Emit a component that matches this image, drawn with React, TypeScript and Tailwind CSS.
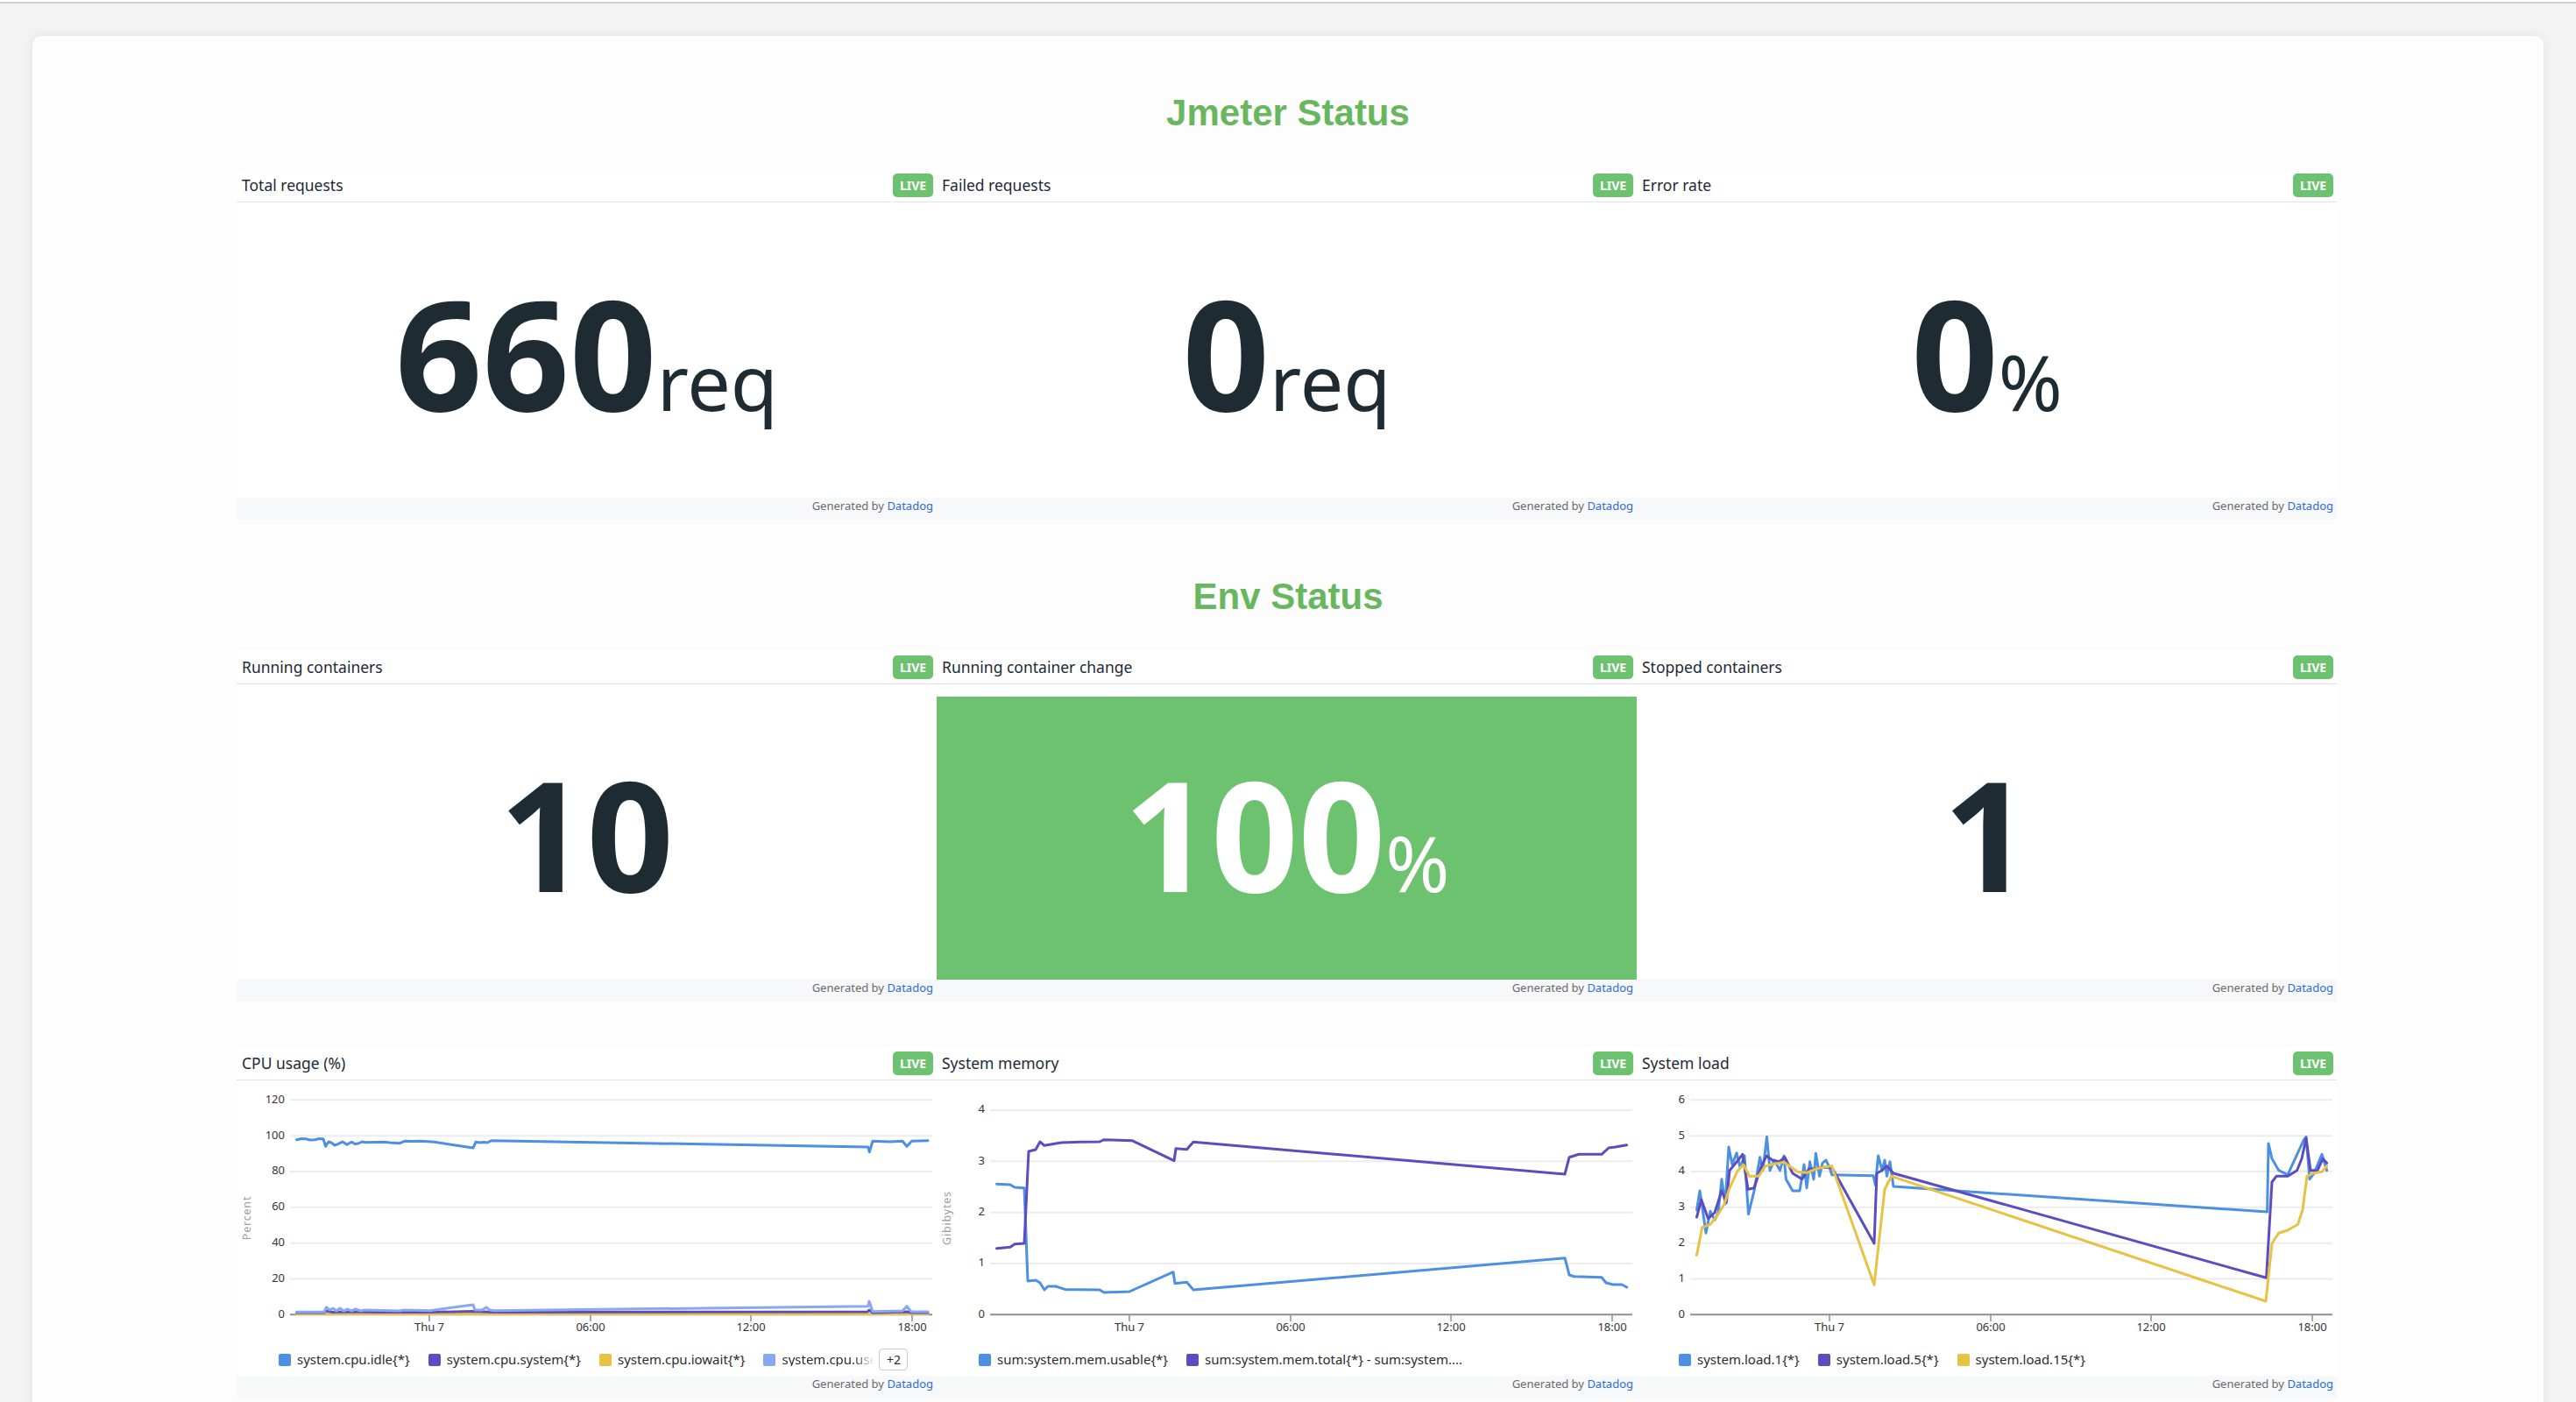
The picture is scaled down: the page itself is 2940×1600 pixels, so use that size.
import React from "react";

const BLUE = "#4b90e2";
const PURPLE = "#5b4cc0";
const YELLOW = "#e8c242";
const LBLUE = "#88a8f3";

type Series = { color: string; pts: string };
type Tick = { label: string; y: number };

function Live() {
  return (
    <span className="h-[27px] w-[46px] rounded-[5px] bg-[#6cc26e] text-white text-[14px] font-bold flex items-center justify-center leading-none">
      LIVE
    </span>
  );
}

function Widget({ title, children }: { title: string; children: React.ReactNode }) {
  return (
    <div className="bg-white flex flex-col">
      <div className="h-[38px] flex items-center justify-between pl-[6px] pr-[4px] border-b border-[#e3e3ea]">
        <span className="text-[17.5px] text-[#1d2a35] leading-none">{title}</span>
        <Live />
      </div>
      <div className="h-[337px] relative overflow-hidden">{children}</div>
      <div className="h-[25px] bg-[#f7f8fa] flex items-start justify-end pr-[4px] pt-[1px] text-[13px] leading-[16px] text-[#6b6b6b]">
        Generated by&nbsp;<span className="text-[#2f6bd3]">Datadog</span>
      </div>
    </div>
  );
}

function BigValue({ value, unit, pt }: { value: string; unit?: string; pt: string }) {
  return (
    <div className={`flex justify-center ${pt}`}>
      <div className="flex items-baseline">
        <span className="text-[174px] leading-none font-bold">{value}</span>
        {unit && <span className="text-[88px] leading-none">{unit}</span>}
      </div>
    </div>
  );
}

const XT = [
  { l: "Thu 7", x: 220 },
  { l: "06:00", x: 404 },
  { l: "12:00", x: 587 },
  { l: "18:00", x: 771 },
];

function Chart({ ticks, yLabel, series }: { ticks: Tick[]; yLabel: string; series: Series[] }) {
  return (
    <svg width={799} height={300} viewBox="0 0 799 300" className="block" fontFamily="'Noto Sans', sans-serif">
      {ticks.map((t, i) => (
        <g key={i}>
          {i !== 0 && <line x1={61} x2={794} y1={t.y} y2={t.y} stroke="#ececec" strokeWidth={2} />}
          <text x={55} y={t.y} textAnchor="end" dominantBaseline="middle" fontSize={13} fill="#333">
            {t.label}
          </text>
        </g>
      ))}
      <text
        transform="translate(13 157) rotate(-90)"
        textAnchor="middle"
        dominantBaseline="middle"
        fontSize={12.5}
        fill="#9c9c9c"
        letterSpacing={0.8}
      >
        {yLabel}
      </text>
      <line x1={61} x2={794} y1={267.3} y2={267.3} stroke="#8f8f8f" strokeWidth={2} />
      {XT.map((t) => (
        <g key={t.l}>
          <line x1={t.x} x2={t.x} y1={267} y2={275} stroke="#8f8f8f" strokeWidth={1.5} />
          <text x={t.x} y={283} textAnchor="middle" dominantBaseline="middle" fontSize={13} fill="#333">
            {t.l}
          </text>
        </g>
      ))}
      {series.map((s, i) => (
        <polyline
          key={i}
          points={s.pts}
          fill="none"
          stroke={s.color}
          strokeWidth={3}
          strokeLinejoin="round"
          strokeLinecap="round"
        />
      ))}
    </svg>
  );
}

function LegendItem({ sq, text }: { sq: string; text: string }) {
  return (
    <div className="flex items-center gap-[7px] whitespace-nowrap">
      <span className={`w-[14px] h-[14px] rounded-[2px] shrink-0 ${sq}`} />
      <span>{text}</span>
    </div>
  );
}

function Legend({ children }: { children: React.ReactNode }) {
  return (
    <div className="h-[37px] flex items-center pl-[48px] gap-[21px] text-[15px] text-[#2c2c2c] leading-none">
      {children}
    </div>
  );
}

const six = (max: number, step: number): Tick[] =>
  Array.from({ length: 7 }, (_, i) => ({ label: String(i * step), y: 267.3 - i * 40.83 })).slice(0, max / step + 1);

const cpuTicks = six(120, 20);
const loadTicks = six(6, 1);
const memTicks: Tick[] = [0, 1, 2, 3, 4].map((v) => ({ label: String(v), y: 267.3 - v * 58.33 }));

const cpuSeries: Series[] = [
  {
    color: YELLOW,
    pts: "68.6,266.5 300,266.5 720,266.5 789,266.5",
  },
  {
    color: PURPLE,
    pts: "68.6,265 100,265 102,263 110,264.5 130,264 160,264.5 220,264.5 270,263.5 294,264.5 720,264 722,262 726,265 766,264 770,265 789,265",
  },
  {
    color: LBLUE,
    pts: "68.6,264.3 100,264.3 102.6,258.7 106,262 110,260 114,263 118,260 122,263 127,261 131,263 136,261 141,263 147,262 186,263 191,262 220.5,262.7 270,256 272,262 280,262 285,259 289,262 294,262.7 720.7,257.7 722,252 726,263.7 760,263 765,257.7 770,264 789,264",
  },
  {
    color: BLUE,
    pts: "68.6,67.7 74,66.5 79,66.7 84,68 89.5,67.7 94,66.5 99,66.7 101.6,75.3 105,70 108,71 112,74 115.7,72.7 121,70 126,73.3 131.4,70.3 135,72.5 139,72 143,70 147,70.7 168,70.3 175,71 186.4,71.7 191.7,69.3 200,69.5 210,69.3 225.7,70.3 270,77 273,70.3 278,71 282,70.5 286,71 291,68.7 720.7,76 722.3,81.7 726,69.3 745,70 760,69.3 765,75.3 770.5,69.3 780,69 789,68.7",
  },
];

const memSeries: Series[] = [
  {
    color: BLUE,
    pts: "68.5,118.3 84,119 89,122 100,122.7 104,229 113,228 118,231 123,239 127,235 136,235 147,238.7 163,238.7 186,239 191,242 220,241 270,218.7 272,231.7 285.5,230.3 293,239 717,202.7 722,222 727.5,223.7 759,224.7 764,231 772,233 782,233 787.6,236",
  },
  {
    color: PURPLE,
    pts: "68.5,191.7 84,190.3 89,186.7 100,186 105,81 113,79 118,70 123,74.3 142,71 163,70.3 186,70 191,67.7 223,68.7 271,91.7 273,77.7 285.5,78.7 293,70.3 717,107 722,87.7 733,84.3 759,84.3 767,77 774.5,76 787.6,73.7",
  },
];

const loadSeries: Series[] = [
  {
    color: BLUE,
    pts: "68.5,147.7 72,126 75,146 79,174.3 84,149.3 89,159.3 93,151 97,112.7 101,141 105,76 109,96 114,82.7 118,99.3 123,86 127.5,152.7 134,126 140.6,87.7 144,102.7 148.5,64.3 152,102.7 157,91 163.6,102.7 168,86 170.4,112.7 178,126 186,126 191,96 194,122.7 197.6,92.7 202,112.7 204.4,83.3 208.6,109.3 212,94.3 216,91 220,99.3 222.7,107.7 270,108.7 272.4,119.3 275.6,86 280,102.7 283,91 285.5,109.3 289,92.7 293,121 719.6,150 721,72 725,89.3 732.7,102.7 743,107.7 756,79.3 761.5,67.7 764,64.3 768,112.7 773,106 782,84.3 787.6,102.7",
  },
  {
    color: PURPLE,
    pts: "68.5,156 73.7,136 81.5,157.7 89,151 97,126 102.4,139.3 106,102.7 113,94.3 120.8,84.3 127,124.3 134,122.7 141.7,99.3 148,86 154.7,91 162.6,92.7 169,87.7 178,106 188.7,112.7 196.6,101 204.4,101 212.3,99.3 222.7,99.3 271,186 274,106 280,102.7 285.5,97.7 293,106 718.6,225.3 725,116 730,109.3 743,109.3 753.6,102.7 759,89.3 764,66 769,102.7 777,102.7 783,89.3 787.6,94.3",
  },
  {
    color: YELLOW,
    pts: "68.5,199.3 74.7,167.7 84,164.3 92,154.3 100,141 106,122.7 115.5,102.7 121.8,96 128.6,109.3 139,109.3 147,97.7 157,95.3 168,93.3 183.5,104.3 194,105.3 204.4,101 215,98.7 222.7,97.7 271,233.3 283,124.3 290.7,109.3 718,252 725,186 732.7,174.3 743,171 754.6,164.3 760,147.7 765,109.3 772,106 782,104.3 787.6,97.7",
  },
];

function TitleBlock({ text, h }: { text: string; h: string }) {
  return (
    <div className={`${h} pt-[67px] text-center`}>
      <span className="font-['Liberation_Sans',Arial,sans-serif] font-bold text-[42px] leading-none text-[#68b75f]">
        {text}
      </span>
    </div>
  );
}

export default function App() {
  return (
    <div className="min-h-screen bg-[#f3f3f3] font-['Noto_Sans',sans-serif] text-[#1f2b33]">
      <div className="h-[2px] bg-white" />
      <div className="h-[2px] bg-[#cfcfcf]" />
      <div className="px-[37px] pt-[37px]">
        <div className="rounded-[10px] bg-[#fdfdfd] shadow-[0_0_14px_rgba(0,0,0,0.07)] pb-[80px]">
          <TitleBlock text="Jmeter Status" h="h-[152px]" />
          <div className="ml-[233px] w-[2397px] grid grid-cols-3">
            <Widget title="Total requests">
              <BigValue value="660" unit="req" pt="pt-[84px]" />
            </Widget>
            <Widget title="Failed requests">
              <BigValue value="0" unit="req" pt="pt-[84px]" />
            </Widget>
            <Widget title="Error rate">
              <BigValue value="0" unit="%" pt="pt-[84px]" />
            </Widget>
          </div>
          <TitleBlock text="Env Status" h="h-[150px]" />
          <div className="ml-[233px] w-[2397px] grid grid-cols-3">
            <Widget title="Running containers">
              <BigValue value="10" pt="pt-[83px]" />
            </Widget>
            <Widget title="Running container change">
              <div className="pt-[14px] h-full">
                <div className="h-[323px] bg-[#6cc26e] text-white">
                  <BigValue value="100" unit="%" pt="pt-[69px]" />
                </div>
              </div>
            </Widget>
            <Widget title="Stopped containers">
              <BigValue value="1" pt="pt-[83px]" />
            </Widget>
          </div>
          <div className="h-[52px]" />
          <div className="ml-[233px] w-[2397px] grid grid-cols-3">
            <Widget title="CPU usage (%)">
              <Chart ticks={cpuTicks} yLabel="Percent" series={cpuSeries} />
              <Legend>
                <LegendItem sq="bg-[#4b90e2]" text="system.cpu.idle{*}" />
                <LegendItem sq="bg-[#5b4cc0]" text="system.cpu.system{*}" />
                <LegendItem sq="bg-[#e8c242]" text="system.cpu.iowait{*}" />
                <div className="flex items-center gap-[5px]">
                  <div className="flex items-center gap-[7px]">
                    <span className="w-[14px] h-[14px] rounded-[2px] bg-[#88a8f3] shrink-0" />
                    <span className="w-[106px] overflow-hidden whitespace-nowrap [mask-image:linear-gradient(to_right,#000_78%,transparent)]">
                      system.cpu.use
                    </span>
                  </div>
                  <span className="h-[25px] w-[33px] shrink-0 rounded-[4px] border border-[#c9c9d2] bg-white flex items-center justify-center text-[14px] text-[#2c2c2c]">
                    +2
                  </span>
                </div>
              </Legend>
            </Widget>
            <Widget title="System memory">
              <Chart ticks={memTicks} yLabel="Gibibytes" series={memSeries} />
              <Legend>
                <LegendItem sq="bg-[#4b90e2]" text="sum:system.mem.usable{*}" />
                <LegendItem sq="bg-[#5b4cc0]" text="sum:system.mem.total{*} - sum:system...." />
              </Legend>
            </Widget>
            <Widget title="System load">
              <Chart ticks={loadTicks} yLabel="" series={loadSeries} />
              <Legend>
                <LegendItem sq="bg-[#4b90e2]" text="system.load.1{*}" />
                <LegendItem sq="bg-[#5b4cc0]" text="system.load.5{*}" />
                <LegendItem sq="bg-[#e8c242]" text="system.load.15{*}" />
              </Legend>
            </Widget>
          </div>
        </div>
      </div>
    </div>
  );
}
